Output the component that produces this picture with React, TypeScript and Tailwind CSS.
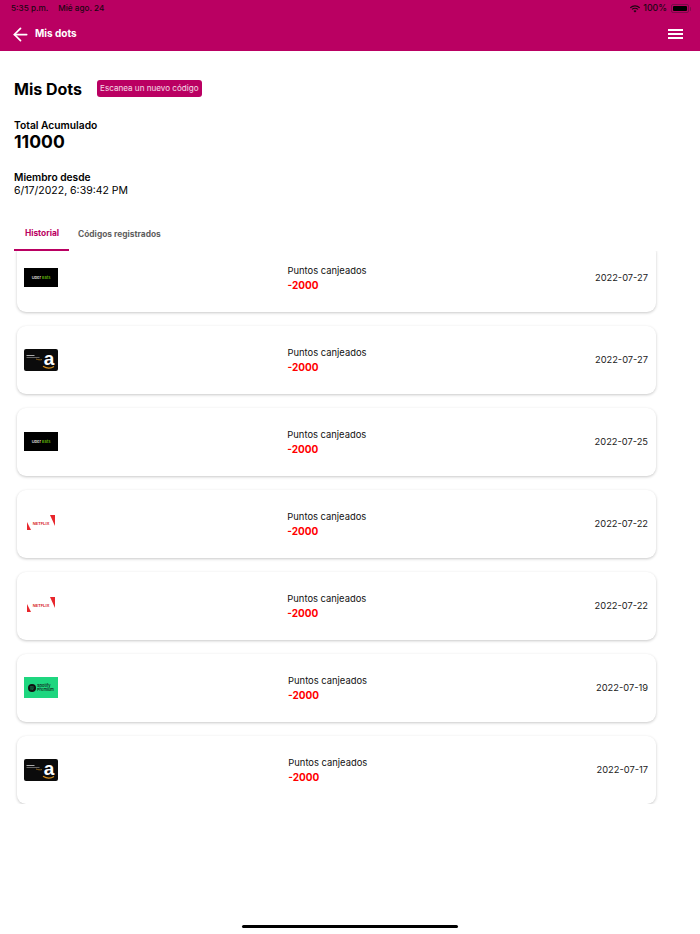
import React from 'react';
import { ArrowLeft } from 'lucide-react';

type Brand = 'uber' | 'amazon' | 'netflix' | 'spotify';

const rows: { brand: Brand; date: string }[] = [
  { brand: 'uber', date: '2022-07-27' },
  { brand: 'amazon', date: '2022-07-27' },
  { brand: 'uber', date: '2022-07-25' },
  { brand: 'netflix', date: '2022-07-22' },
  { brand: 'netflix', date: '2022-07-22' },
  { brand: 'spotify', date: '2022-07-19' },
  { brand: 'amazon', date: '2022-07-17' },
];

function BrandLogo({ brand }: { brand: Brand }) {
  if (brand === 'uber') {
    return (
      <div className="w-[34px] h-[19px] mt-[-1px] bg-black flex items-center justify-center text-[4px] font-semibold leading-none text-[#ddd]">
        Uber&nbsp;<span className="text-[#5fb709]">Eats</span>
      </div>
    );
  }
  if (brand === 'amazon') {
    return (
      <div className="w-[34px] h-[22px] mt-[-1px] bg-[#0b0b0b] rounded-[2px]">
        <svg viewBox="0 0 34 22" className="w-full h-full">
          <rect x="2.5" y="6" width="8" height="1" fill="#aaa" />
          <rect x="2.5" y="8" width="13" height="1" fill="#666" />
          <path d="M12 10c2 .9 4 1 6 .6" stroke="#a8751a" strokeWidth="0.8" fill="none" />
          <text x="25" y="15.5" textAnchor="middle" fontFamily="Liberation Sans, sans-serif" fontWeight="700" fontSize="19" fill="#fff">a</text>
          <path d="M19 17.2c3.5 2.2 8 2.2 11 .2" stroke="#d8901c" strokeWidth="1.2" fill="none" />
        </svg>
      </div>
    );
  }
  if (brand === 'netflix') {
    return (
      <div className="w-[28px] h-[16px] ml-[3px] mt-[-3px] bg-white">
        <svg viewBox="0 0 28 16" className="w-full h-full">
          <path d="M0 7 L4 15 L0 15 Z" fill="#e8262c" />
          <path d="M23 0 L28 0 L28 11 Z" fill="#e8262c" />
          <text x="14" y="9.5" textAnchor="middle" fontFamily="Liberation Sans, sans-serif" fontWeight="700" fontSize="4" fill="#d8262c">NETFLIX</text>
        </svg>
      </div>
    );
  }
  return (
    <div className="w-[34px] h-[21px] mt-[-1px] bg-[#1ed67f] flex items-center pl-[4px] gap-[1px]">
      <svg viewBox="0 0 10 10" className="w-[8px] h-[8px] shrink-0">
        <circle cx="5" cy="5" r="5" fill="#101010" />
        <path d="M2.3 3.6c1.8-.5 3.7-.3 5.4.5M2.6 5.1c1.5-.4 3.1-.2 4.5.5M2.9 6.5c1.2-.3 2.5-.1 3.6.4" stroke="#1ed67f" strokeWidth="0.6" fill="none" />
      </svg>
      <div className="text-[4px] leading-[4px] font-medium text-[#101010]">
        Spotify
        <br />
        Premium
      </div>
    </div>
  );
}

export default function App() {
  return (
    <div className="relative w-[700px] h-[934px] bg-white flex flex-col overflow-hidden font-['Inter',sans-serif] text-black">
      {/* Header */}
      <header className="h-[51px] bg-[#ba0062] shrink-0 flex flex-col">
        <div className="h-4 pl-[11px] pr-[11px] pt-[1px] flex items-center justify-between text-[8.2px] font-medium leading-none text-[#1c0612]">
          <div className="flex gap-[10px]">
            <span>5:35 p.m.</span>
            <span>Mié ago. 24</span>
          </div>
          <div className="flex items-center gap-[3px]">
            <svg viewBox="0 0 12 9" className="w-[10px] h-[8px]">
              <path d="M0.4 3C3.6 0.1 8.4 0.1 11.6 3" stroke="#1c0612" strokeWidth="1.4" fill="none" />
              <path d="M2.4 5C4.4 3.2 7.6 3.2 9.6 5" stroke="#1c0612" strokeWidth="1.4" fill="none" />
              <path d="M4.2 6.8C5.2 5.9 6.8 5.9 7.8 6.8L6 8.8Z" fill="#1c0612" />
            </svg>
            <span className="text-[8.8px]">100%</span>
            <div className="w-[18px] h-[9px] ml-[1px] rounded-[2px] border border-[#7d0a4a] p-[1px] relative">
              <div className="w-full h-full bg-black rounded-[1px]" />
              <div className="absolute right-[-3px] top-[1.5px] w-[1.5px] h-[4px] bg-[#7d0a4a] rounded-r-sm" />
            </div>
          </div>
        </div>
        <div className="flex-1 pl-[10px] pr-[17px] flex items-center justify-between text-white">
          <div className="flex items-center gap-[4px]">
            <ArrowLeft className="w-[21px] h-[21px] mt-[1px]" strokeWidth={2} />
            <span className="text-[10px] font-bold">Mis dots</span>
          </div>
          <div className="flex flex-col gap-[2px]">
            <div className="w-[15px] h-[2px] bg-white" />
            <div className="w-[15px] h-[2px] bg-white" />
            <div className="w-[15px] h-[2px] bg-white" />
          </div>
        </div>
      </header>

      {/* Summary */}
      <section className="px-[14px] pt-[28px] shrink-0">
        <div className="flex items-center gap-[15px] h-[19px]">
          <h1 className="text-[16px] font-bold leading-none">Mis Dots</h1>
          <button className="h-[17px] px-[3px] rounded-[3px] bg-[#ba0062] text-[8.1px] leading-none text-white/85">
            Escanea un nuevo código
          </button>
        </div>
        <div className="mt-[21px] text-[10.25px] font-semibold leading-[13px]">Total Acumulado</div>
        <div className="text-[17.6px] font-bold leading-[19px]">11000</div>
        <div className="mt-[20px] text-[10.2px] font-semibold leading-[13px]">Miembro desde</div>
        <div className="text-[10.5px] leading-[13px]">6/17/2022, 6:39:42 PM</div>
      </section>

      {/* Tabs */}
      <nav className="px-[14px] mt-[20px] flex shrink-0 text-[8.4px] font-bold">
        <div className="w-[55px] h-[34px] pl-[1px] flex items-center justify-center border-b-2 border-[#ba0062] text-[#ba0062]">
          Historial
        </div>
        <div className="h-[34px] ml-[9px] flex items-center text-[#5f5f5f]">Códigos registrados</div>
      </nav>

      {/* History list, scrolled a few pixels */}
      <div className="h-[553px] overflow-hidden shrink-0">
        <div className="-mt-[7px] pl-[17px] w-[656px] flex flex-col gap-[14px]">
          {rows.map((row, idx) => (
            <div
              key={idx}
              className="h-[68px] rounded-[9px] bg-white pl-[7px] pr-2 flex items-center justify-between shadow-[0_1px_3px_rgba(0,0,0,0.22)]"
            >
              <div className="w-[34px] flex justify-start">
                <BrandLogo brand={row.brand} />
              </div>
              <div className="mb-[1px] ml-[1px]">
                <div className="text-[9.4px] leading-[15px] text-[#111]">Puntos canjeados</div>
                <div className="text-[10px] leading-[15px] font-bold text-[#f00]">-2000</div>
              </div>
              <div className="text-[9.3px] text-[#222]">{row.date}</div>
            </div>
          ))}
        </div>
      </div>

      {/* Home indicator */}
      <div className="absolute left-[242px] bottom-[6px] w-[216px] h-[3px] rounded-full bg-black" />
    </div>
  );
}
